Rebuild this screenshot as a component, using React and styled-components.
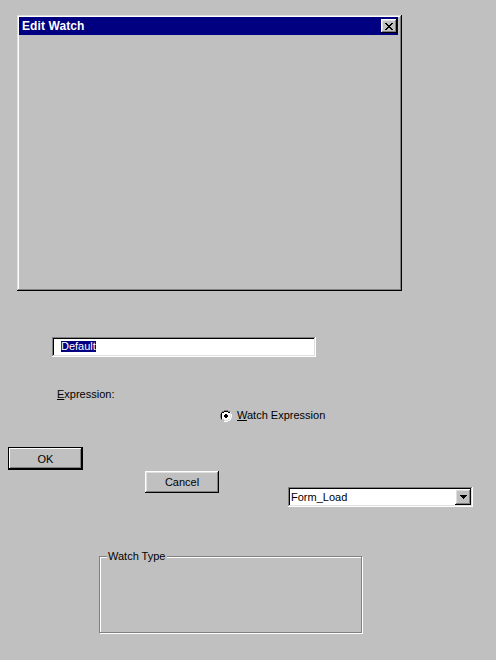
import React from 'react';
import styled, { createGlobalStyle } from 'styled-components';

const GlobalStyle = createGlobalStyle`
  html, body {
    margin: 0;
    padding: 0;
    background: #c0c0c0;
  }
  body {
    font-family: "Liberation Sans", Arial, sans-serif;
    font-size: 11px;
    color: #000;
  }
`;

const raised = `
  box-shadow: inset -1px -1px #000, inset 1px 1px #fff,
    inset -2px -2px #808080, inset 2px 2px #dfdfdf;
`;

const sunken = `
  box-shadow: inset -1px -1px #fff, inset 1px 1px #808080,
    inset -2px -2px #dfdfdf, inset 2px 2px #000;
`;

const Page = styled.div`
  display: flex;
  flex-direction: column;
  align-items: flex-start;
  padding-top: 15px;
  min-height: 660px;
  box-sizing: border-box;
`;

const Window = styled.div`
  margin-left: 17px;
  width: 385px;
  height: 276px;
  box-sizing: border-box;
  padding: 2px 4px 2px 2px;
  background: #c0c0c0;
  box-shadow: inset -1px -1px #000, inset 1px 1px #dfdfdf,
    inset -2px -2px #808080, inset 2px 2px #fff;
`;

const TitleBar = styled.div`
  height: 18px;
  background: #000080;
  display: flex;
  align-items: center;
  justify-content: space-between;
  padding: 0 1px 0 3px;
`;

const TitleText = styled.span`
  color: #fff;
  font-weight: bold;
  font-size: 12px;
  letter-spacing: 0.1px;
`;

const CloseButton = styled.div`
  width: 16px;
  height: 14px;
  background: #c0c0c0;
  ${raised}
  display: flex;
  align-items: center;
  justify-content: center;
`;

const TextField = styled.div`
  margin: 46px 0 0 52px;
  width: 264px;
  height: 20px;
  box-sizing: border-box;
  background: #fff;
  ${sunken}
  padding: 4px 0 0 9px;
  line-height: 11px;
`;

const Selected = styled.span`
  background: #000080;
  color: #fff;
  display: inline-block;
  height: 11px;
`;

const Label = styled.div`
  margin: ${(p) => p.$top}px 0 0 ${(p) => p.$left}px;
  line-height: 13px;
`;

const RadioRow = styled.div`
  margin: 8px 0 0 220px;
  display: flex;
  align-items: center;
  gap: 5px;
  line-height: 13px;
`;

const Button = styled.div`
  margin: ${(p) => p.$top}px 0 0 ${(p) => p.$left}px;
  width: ${(p) => p.$w}px;
  height: ${(p) => p.$h}px;
  box-sizing: border-box;
  display: flex;
  align-items: center;
  justify-content: center;
  background: #c0c0c0;
  ${(p) =>
    p.$default
      ? `box-shadow: inset 0 0 0 1px #000, inset -2px -2px #000, inset 2px 2px #fff, inset -3px -3px #808080;`
      : raised}
`;

const Row = styled.div`
  display: flex;
  align-items: flex-start;
  margin-top: 1px;
`;

const Combo = styled.div`
  margin: 16px 0 0 69px;
  width: 185px;
  height: 20px;
  box-sizing: border-box;
  background: #fff;
  ${sunken}
  display: flex;
  align-items: center;
  justify-content: space-between;
  padding: 2px 2px 2px 3px;
`;

const ComboButton = styled.div`
  width: 16px;
  height: 16px;
  background: #c0c0c0;
  ${raised}
  display: flex;
  align-items: center;
  justify-content: center;
`;

const GroupBox = styled.div`
  position: relative;
  margin: 49px 0 0 99px;
  width: 263px;
  height: 77px;
  box-sizing: border-box;
  border: 1px solid #808080;
  box-shadow: inset 1px 1px #fff, 1px 1px #fff;
`;

const GroupLabel = styled.span`
  position: absolute;
  left: 7px;
  top: -7px;
  padding: 0 2px 0 1px;
  background: #c0c0c0;
  line-height: 13px;
`;

const CloseIcon = () => (
  <svg width="8" height="7" viewBox="0 0 8 7" shapeRendering="crispEdges">
    <path
      d="M0 0h2v1h-2zM6 0h2v1h-2zM1 1h2v1h-2zM5 1h2v1h-2zM2 2h4v1h-4zM3 3h2v1h-2zM2 4h4v1h-4zM1 5h2v1h-2zM5 5h2v1h-2zM0 6h2v1h-2zM6 6h2v1h-2z"
      fill="#000"
    />
  </svg>
);

const RadioIcon = () => (
  <svg width="12" height="12" viewBox="0 0 12 12" shapeRendering="crispEdges">
    <path d="M4 0h4v1h-4zM2 1h2v1h-2zM8 1h2v1h-2zM1 2h1v2h-1zM0 4h1v4h-1zM1 8h1v2h-1z" fill="#808080" />
    <path d="M4 1h4v1h-4zM2 2h2v1h-2zM8 2h2v1h-2zM2 3h-1v1h1zM1 4h1v4h-1zM2 8v1h-1v-1z" fill="#000" />
    <path d="M4 2h4v1h-4zM2 3h8v1h-8zM2 4h8v4h-8zM2 8h8v1h-8zM4 9h4v1h-4z" fill="#fff" />
    <path d="M10 2h1v2h-1zM10 4h1v4h-1zM10 8h1v1h-1zM8 9h2v1h-2zM4 10h4v1h-4z" fill="#dfdfdf" />
    <path d="M10 8h1v2h-1zM11 4h1v4h-1zM8 10h2v1h-2zM4 11h4v1h-4zM10 9h1v1h-1z" fill="#fff" />
    <path d="M5 4h2v1h-2zM4 5h4v2h-4zM5 7h2v1h-2z" fill="#000" />
  </svg>
);

const ArrowIcon = () => (
  <svg width="7" height="4" viewBox="0 0 7 4" shapeRendering="crispEdges">
    <path d="M0 0h7v1h-7zM1 1h5v1h-5zM2 2h3v1h-3zM3 3h1v1h-1z" fill="#000" />
  </svg>
);

export default function App() {
  return (
    <>
      <GlobalStyle />
      <Page>
        <Window>
          <TitleBar>
            <TitleText>Edit Watch</TitleText>
            <CloseButton>
              <CloseIcon />
            </CloseButton>
          </TitleBar>
        </Window>

        <TextField>
          <Selected>Default</Selected>
        </TextField>

        <Label $top={31} $left={57}>
          <u>E</u>xpression:
        </Label>

        <RadioRow>
          <RadioIcon />
          <span>
            <u>W</u>atch Expression
          </span>
        </RadioRow>

        <Button $top={25} $left={8} $w={75} $h={23} $default>
          OK
        </Button>

        <Row>
          <Button $top={0} $left={145} $w={74} $h={22}>
            Cancel
          </Button>
          <Combo>
            <span>Form_Load</span>
            <ComboButton>
              <ArrowIcon />
            </ComboButton>
          </Combo>
        </Row>

        <GroupBox>
          <GroupLabel>Watch Type</GroupLabel>
        </GroupBox>
      </Page>
    </>
  );
}
